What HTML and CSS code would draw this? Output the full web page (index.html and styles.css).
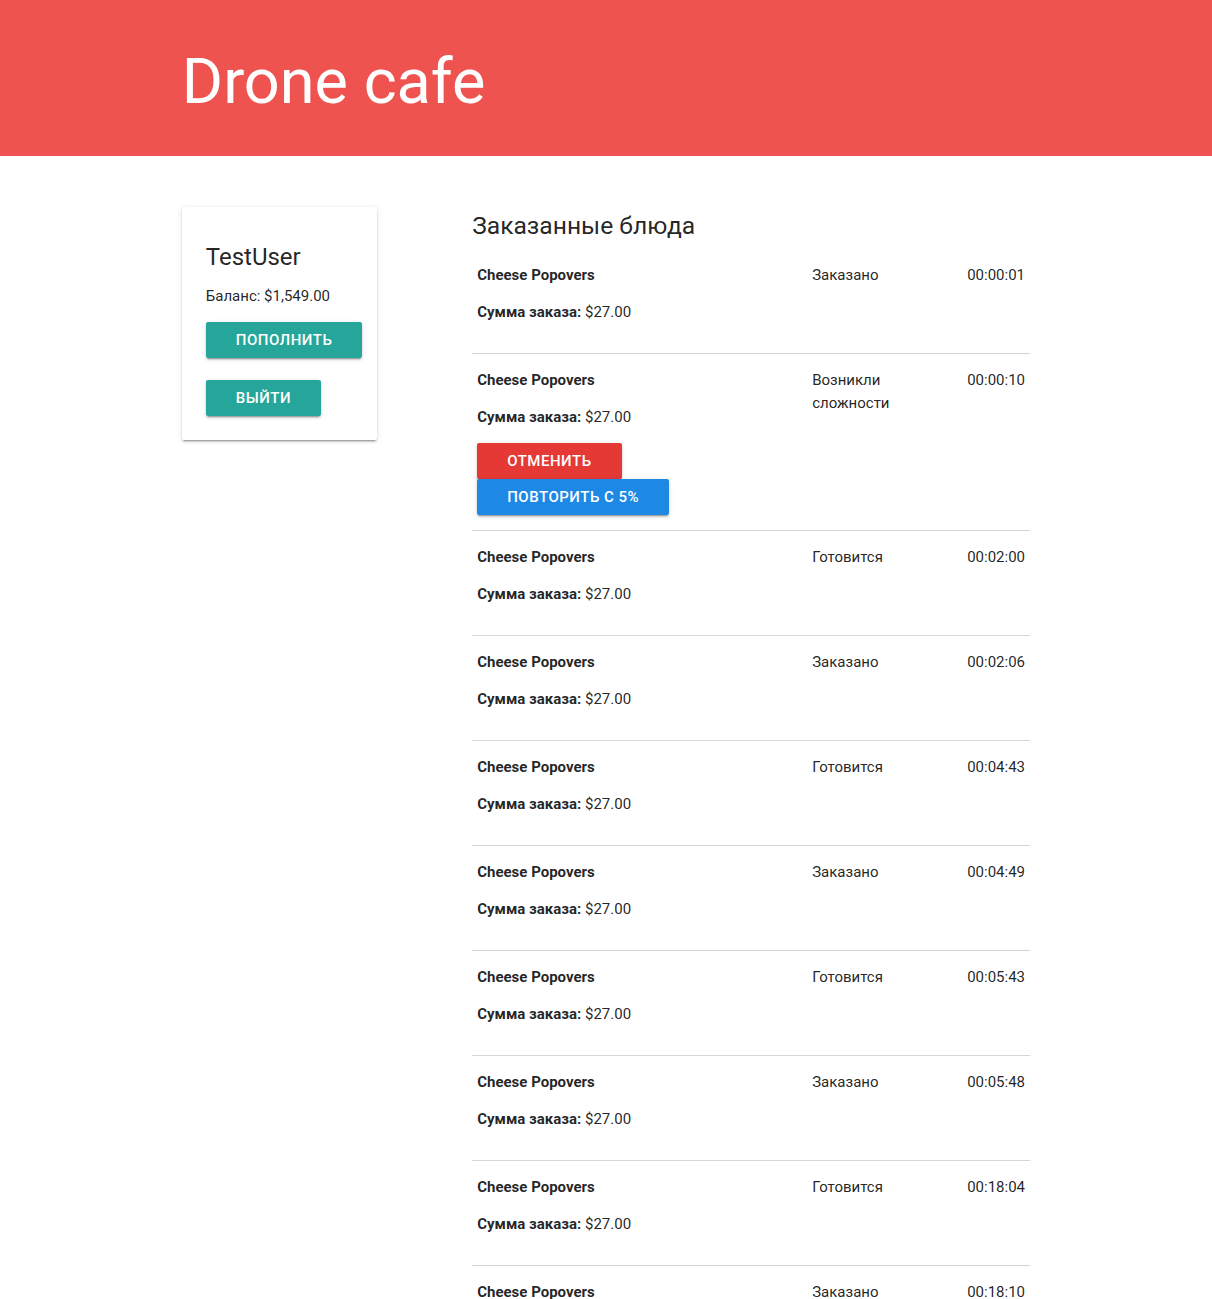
FILE: index.html
```html
<!DOCTYPE html>
<html lang="ru">
<head>
<meta charset="utf-8">
<title>Drone cafe</title>
<link rel="stylesheet" href="styles.css">
</head>
<body>
<header class="topbar">
  <div class="container">
    <h1 class="brand">Drone cafe</h1>
  </div>
</header>
<main class="container main">
  <aside class="side">
    <div class="card">
      <div class="card-title">TestUser</div>
      <p class="balance">Баланс: $1,549.00</p>
      <button class="btn btn-teal btn-topup">Пополнить</button>
      <button class="btn btn-teal btn-exit">Выйти</button>
    </div>
  </aside>
  <section class="orders">
    <h5 class="orders-title">Заказанные блюда</h5>
    <div class="order">
      <div class="cell"><div class="dish">Cheese Popovers</div><p class="sum"><b>Сумма заказа:</b> $27.00</p></div>
      <div class="cell">Заказано</div>
      <div class="cell time">00:00:01</div>
    </div>
    <div class="order">
      <div class="cell"><div class="dish">Cheese Popovers</div><p class="sum"><b>Сумма заказа:</b> $27.00</p>
        <div class="actions">
          <button class="btn btn-red">Отменить</button>
          <button class="btn btn-blue">Повторить с 5%</button>
        </div>
      </div>
      <div class="cell">Возникли сложности</div>
      <div class="cell time">00:00:10</div>
    </div>
    <div class="order">
      <div class="cell"><div class="dish">Cheese Popovers</div><p class="sum"><b>Сумма заказа:</b> $27.00</p></div>
      <div class="cell">Готовится</div>
      <div class="cell time">00:02:00</div>
    </div>
    <div class="order">
      <div class="cell"><div class="dish">Cheese Popovers</div><p class="sum"><b>Сумма заказа:</b> $27.00</p></div>
      <div class="cell">Заказано</div>
      <div class="cell time">00:02:06</div>
    </div>
    <div class="order">
      <div class="cell"><div class="dish">Cheese Popovers</div><p class="sum"><b>Сумма заказа:</b> $27.00</p></div>
      <div class="cell">Готовится</div>
      <div class="cell time">00:04:43</div>
    </div>
    <div class="order">
      <div class="cell"><div class="dish">Cheese Popovers</div><p class="sum"><b>Сумма заказа:</b> $27.00</p></div>
      <div class="cell">Заказано</div>
      <div class="cell time">00:04:49</div>
    </div>
    <div class="order">
      <div class="cell"><div class="dish">Cheese Popovers</div><p class="sum"><b>Сумма заказа:</b> $27.00</p></div>
      <div class="cell">Готовится</div>
      <div class="cell time">00:05:43</div>
    </div>
    <div class="order">
      <div class="cell"><div class="dish">Cheese Popovers</div><p class="sum"><b>Сумма заказа:</b> $27.00</p></div>
      <div class="cell">Заказано</div>
      <div class="cell time">00:05:48</div>
    </div>
    <div class="order">
      <div class="cell"><div class="dish">Cheese Popovers</div><p class="sum"><b>Сумма заказа:</b> $27.00</p></div>
      <div class="cell">Готовится</div>
      <div class="cell time">00:18:04</div>
    </div>
    <div class="order">
      <div class="cell"><div class="dish">Cheese Popovers</div><p class="sum"><b>Сумма заказа:</b> $27.00</p></div>
      <div class="cell">Заказано</div>
      <div class="cell time">00:18:10</div>
    </div>
  </section>
</main>
</body>
</html>
```
FILE: styles.css
```css
html {
  font-size: 15px;
}
body {
  margin: 0;
  font-family: Roboto, "Noto Sans", sans-serif;
  font-size: 15px;
  line-height: 1.5;
  color: rgba(0, 0, 0, 0.87);
  background: #fff;
}
.container {
  width: 70%;
  margin: 0 auto;
}
.topbar {
  background: #ef5350;
  padding: 15px 0;
}
.brand {
  margin: 31.5px 0 25.2px;
  font-size: 63px;
  line-height: 110%;
  font-weight: 400;
  color: #fff;
}
.main {
  display: flex;
  justify-content: space-between;
  align-items: flex-start;
  padding-top: 51px;
}
.side {
  width: 195px;
}
.card {
  background: #fff;
  border-radius: 2px;
  padding: 24px;
  box-shadow: 0 2px 2px 0 rgba(0,0,0,0.14), 0 1px 5px 0 rgba(0,0,0,0.12), 0 3px 1px -2px rgba(0,0,0,0.2);
}
.card-title {
  font-size: 24px;
  line-height: 32px;
  font-weight: 400;
  margin-top: 10px;
}
.balance {
  margin: 12px 0 15px;
  font-size: 15px;
  line-height: 22.5px;
}
.btn {
  display: block;
  height: 36px;
  line-height: 36px;
  padding: 0 30px;
  border: none;
  border-radius: 2px;
  font-family: Roboto, "Noto Sans", sans-serif;
  font-size: 15px;
  font-weight: 500;
  letter-spacing: 0.5px;
  text-transform: uppercase;
  color: #fff;
  cursor: pointer;
  box-shadow: 0 2px 2px 0 rgba(0,0,0,0.14), 0 1px 5px 0 rgba(0,0,0,0.12), 0 3px 1px -2px rgba(0,0,0,0.2);
}
.btn-teal { background: #26a69a; }
.btn-red { background: #e53935; }
.btn-blue { background: #1e88e5; }
.btn-exit { margin-top: 22px; }
.orders {
  width: 558px;
}
.orders-title {
  margin: 5.5px 0 10px;
  font-size: 24.6px;
  line-height: 27px;
  font-weight: 400;
}
.order {
  display: grid;
  grid-template-columns: 335px 155px 68px;
  border-bottom: 1px solid #d6d6d6;
}
.cell {
  padding: 15px 5px;
}
.time {
  white-space: nowrap;
}
.dish {
  font-weight: 700;
}
.sum {
  margin: 14px 0 15px;
}
.actions {
  display: flex;
  flex-direction: column;
  align-items: flex-start;
}
```
